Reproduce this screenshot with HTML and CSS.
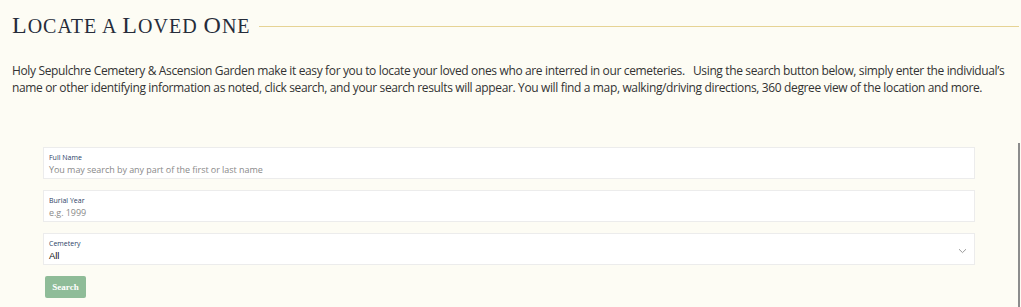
FILE: index.html
```html
<!DOCTYPE html>
<html lang="en">
<head>
<meta charset="utf-8">
<title>Locate a Loved One</title>
<link rel="stylesheet" href="styles.css">
</head>
<body>
<div class="page">
  <main class="content">
    <div class="title-row">
      <h1 class="title"><span class="cap">L</span>ocate a <span class="cap">L</span>oved <span class="cap">O</span>ne</h1>
      <span class="rule"></span>
    </div>
    <p class="intro">Holy Sepulchre Cemetery &amp; Ascension Garden make it easy for you to locate your loved ones who are interred in our cemeteries. &nbsp; Using the search button below, simply enter the individual’s name or other identifying information as noted, click search, and your search results will appear. You will find a map, walking/driving directions, 360 degree view of the location and more.</p>
    <form class="search-form">
      <div class="field">
        <label class="field-label">Full Name</label>
        <span class="field-input placeholder">You may search by any part of the first or last name</span>
      </div>
      <div class="field">
        <label class="field-label">Burial Year</label>
        <span class="field-input placeholder">e.g. 1999</span>
      </div>
      <div class="field field-select">
        <div class="select-text">
          <label class="field-label">Cemetery</label>
          <span class="field-input value">All</span>
        </div>
        <svg class="chevron" width="9" height="6" viewBox="0 0 9 6"><path d="M1 1.2 L4.5 4.6 L8 1.2" fill="none" stroke="#9a9a9a" stroke-width="1"/></svg>
      </div>
      <div class="actions">
        <button type="button" class="btn">Search</button>
      </div>
    </form>
  </main>
  <aside class="edge"></aside>
</div>
</body>
</html>
```

FILE: styles.css
```css
html, body {
  margin: 0;
  padding: 0;
  background: #fdfcf4;
}
body {
  font-family: "Open Sans", "Liberation Sans", sans-serif;
  color: #333;
}
.page {
  display: flex;
  height: 307px;
  overflow: hidden;
}
.content {
  flex: 1;
  min-width: 0;
  padding-left: 12px;
}
.edge {
  flex: 0 0 0;
  margin-top: 143px;
  border-left: 2px solid #8c8c8c;
  position: relative;
  left: -1px;
}
.title-row {
  display: flex;
  align-items: center;
  gap: 8px;
  padding-top: 10px;
  height: 30px;
}
.title {
  margin: 0;
  font-family: "Liberation Serif", "Times New Roman", serif;
  font-weight: normal;
  text-transform: uppercase;
  font-size: 20px;
  letter-spacing: 1px;
  color: #262c3a;
  line-height: 30px;
  white-space: nowrap;
}
.cap {
  font-size: 24px;
}
.rule {
  flex: 1;
  height: 1px;
  background: #e6d394;
  margin-top: 3px;
}
.intro {
  margin: 23px 0 0 0;
  font-size: 12px;
  letter-spacing: -0.36px;
  line-height: 16.5px;
  color: #333;
  padding-right: 4px;
}
.search-form {
  margin: 51px 0 0 31px;
  width: 932px;
  display: flex;
  flex-direction: column;
  gap: 11px;
}
.field {
  background: #fff;
  border: 1px solid #ececec;
  padding: 4px 5px 0 5px;
  box-sizing: border-box;
  height: 32px;
  display: flex;
  flex-direction: column;
}
.field-label {
  font-family: "Open Sans", sans-serif;
  font-size: 7px;
  line-height: 11px;
  color: #2a4266;
}
.field-input {
  font-size: 9px;
  letter-spacing: -0.05px;
  line-height: 14px;
}
.placeholder {
  color: #8a8a8a;
}
.field-select {
  flex-direction: row;
  align-items: center;
  justify-content: space-between;
  padding-right: 7px;
}
.select-text {
  display: flex;
  flex-direction: column;
  align-self: flex-start;
}
.value {
  font-family: "Liberation Sans", Arial, sans-serif;
  color: #111;
  font-size: 9.5px;
}
.chevron {
  margin-top: 0;
}
.actions {
  display: flex;
  padding-left: 2px;
}
.btn {
  border: none;
  background: #8fbc98;
  color: #fff;
  font-family: "Liberation Serif", serif;
  font-weight: bold;
  font-size: 9px;
  width: 41px;
  height: 22px;
  border-radius: 2px;
  padding: 0;
  cursor: pointer;
}
```
